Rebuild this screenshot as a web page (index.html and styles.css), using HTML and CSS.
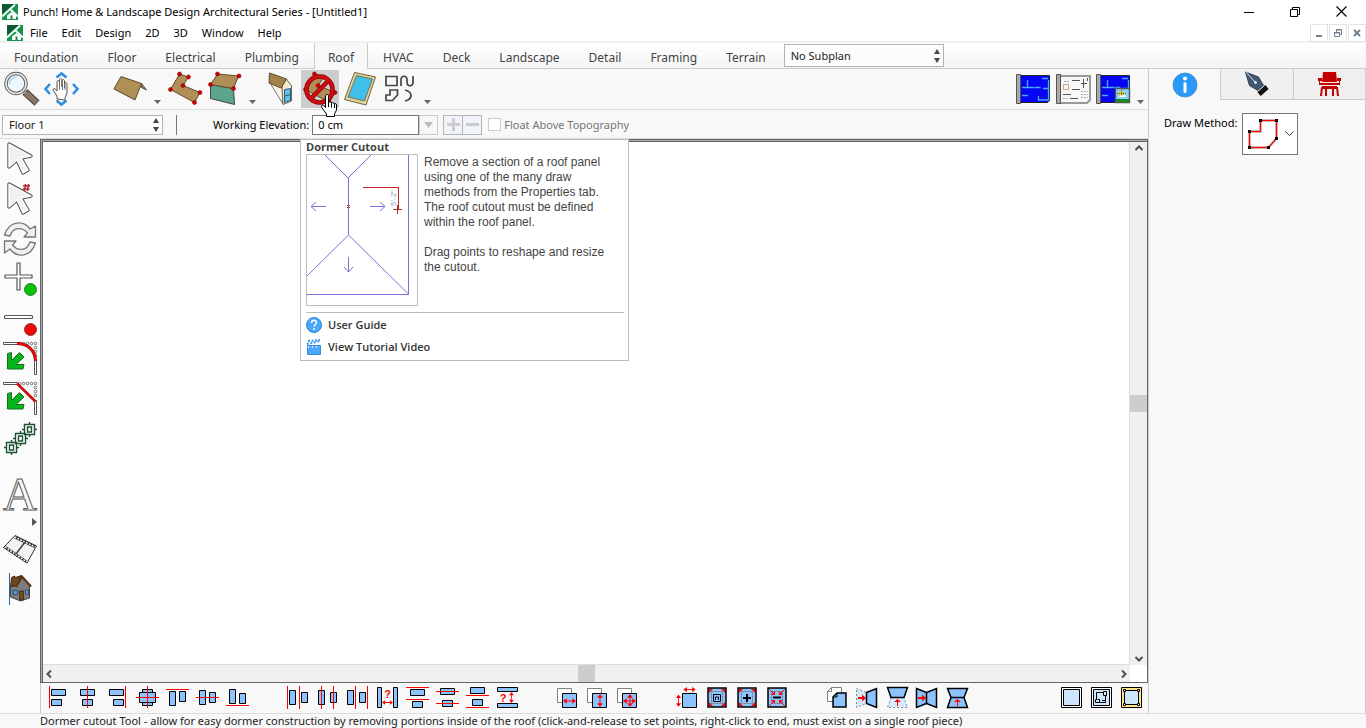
FILE: index.html
```
<!DOCTYPE html>
<html lang="en">
  <head>
    <meta charset="UTF-8" />
    <title>Punch! Home &amp; Landscape Design Architectural Series</title>
    <link rel="stylesheet" href="styles.css">
  </head>
  <body>
    <!-- shared shapes -->
    <svg class="defs" width="0" height="0" aria-hidden="true">
      <defs>
        <symbol id="logo" viewBox="0 0 16 16">
          <path fill="#14964a" d="M0 0h16v16H0z" />
          <path fill="#0b5a33" d="M0 0h12L0 10z" />
          <path fill="none" stroke="#fff" stroke-width="1.800" d="M0 12.500L13 .5M8 5l8 7.500" />
          <path fill="#fff" d="M9.500 8l4.500 3.500V15H5v-3.500z" />
          <path fill="#12884a" d="M8.500 11.500h2V15h-2z" />
        </symbol>
        <symbol id="updown" viewBox="0 0 8 14">
          <path fill="#444" d="M4 0l3 5H1zM4 14l3-5H1z" />
        </symbol>
        <symbol id="drop" viewBox="0 0 8 5">
          <path fill="#666" d="M0 0h7L3.500 4z" />
        </symbol>
        <symbol id="chevron" viewBox="0 0 8 8">
          <path fill="none" stroke="#505050" stroke-width="2" d="M.5 6L4 2.500 7.500 6" />
        </symbol>
        <symbol id="pointer" viewBox="0 0 40 40">
          <path fill="#f4f4f4" stroke="#555" stroke-width="3.400" stroke-linejoin="round" d="M9 5v23l8-7 6 13 5-3-7-12 10-2z" />
          <path fill="#f1f1f1" stroke="#fff" stroke-width="1.400" stroke-linejoin="round" d="M9 5v23l8-7 6 13 5-3-7-12 10-2z" />
        </symbol>
        <symbol id="corner" viewBox="0 0 40 40">
          <path fill="#fff" stroke="#555" d="M3.500 3.500h14v2h-14zM34.500 21.500h2v14h-2z" />
          <g fill="#fff" stroke="#555" stroke-width=".8">
            <circle cx="19.500" cy="4.500" r="1.300" /><circle cx="23.500" cy="4.500" r="1.300" /><circle cx="27.500" cy="4.500" r="1.300" />
            <circle cx="31.500" cy="4.500" r="1.300" /><circle cx="35.500" cy="4.500" r="1.300" /><circle cx="35.500" cy="8.500" r="1.300" />
            <circle cx="35.500" cy="12.500" r="1.300" /><circle cx="35.500" cy="16.500" r="1.300" />
          </g>
          <path fill="#05b51b" stroke="#176b1c" stroke-linejoin="round" d="M7.500 14.500l4-1v8l8-8 4.500 4.500-8 7.500h8l-1 4.500H7.500z" />
        </symbol>
        <symbol id="elbow" viewBox="0 0 40 40">
          <path fill="#b08f56" stroke="#5e4d2c" d="M14.500 5l9 3-5.500 8.500 17 7-5.500 10-24-13z" />
          <g fill="#d40000" stroke="#8d0000" stroke-width=".6">
            <circle cx="14.500" cy="5" r="2" /><circle cx="23.500" cy="8" r="2" /><circle cx="18" cy="16.500" r="2" />
            <circle cx="35" cy="23.500" r="2" /><circle cx="29.500" cy="33.500" r="2" /><circle cx="5.500" cy="20.500" r="2" />
          </g>
        </symbol>
        <symbol id="blueprint" viewBox="0 0 40 40">
          <path fill="#0505f2" stroke="#222" d="M6.500 6.500h30v25l-2 2h-28z" />
          <path fill="none" stroke="#4aa8f5" stroke-width="1.300" d="M14.500 11v7M9 18.500h12M21.500 18.500h6M30 19.500h5M35 9.500h-6M35.500 11v20h-10v-4M9 26.500h6" />
          <path fill="#aaa" stroke="#555" d="M3.500 5.500h4v29h-4z" />
        </symbol>
        <symbol id="arrow-h" viewBox="0 0 14 8">
          <path fill="#f00" d="M0 4l4-3v2.500h6V1l4 3-4 3V4.500H4V7z" />
        </symbol>
        <symbol id="arrow-v" viewBox="0 0 8 14">
          <path fill="#f00" d="M4 0l3 4H4.500v6H7l-3 4-3-4h2.500V4H1z" />
        </symbol>
        <symbol id="frame" viewBox="0 0 30 24">
          <path class="shape wide" d="M5 2h18v19H5z" />
          <path fill="none" stroke="#777" stroke-dasharray="2 1" d="M8.500 5.500h11v12h-11z" />
        </symbol>
      </defs>
    </svg>

    <header class="titlebar">
      <svg width="16" height="16"><use href="#logo" /></svg>
      <span class="caption">Punch! Home &amp; Landscape Design Architectural Series - [Untitled1]</span>
      <div class="window-btns">
        <button aria-label="Minimize"><svg width="10" height="10"><path stroke="#000" d="M0 5.500h10" /></svg></button>
        <button aria-label="Restore"><svg width="10" height="10"><path fill="none" stroke="#000" d="M.5 2.500h7v7h-7zM2.500 2V.5h7v7H8" /></svg></button>
        <button aria-label="Close"><svg width="11" height="11"><path stroke="#000" stroke-width="1.200" d="M.5.5l10 10M10.500.5l-10 10" /></svg></button>
      </div>
    </header>

    <nav class="menubar">
      <svg width="16" height="16"><use href="#logo" /></svg>
      <a href="#">File</a>
      <a href="#">Edit</a>
      <a href="#">Design</a>
      <a href="#">2D</a>
      <a href="#">3D</a>
      <a href="#">Window</a>
      <a href="#">Help</a>
      <div class="child-btns">
        <button aria-label="Minimize plan"><svg width="8" height="8"><path stroke="#708090" stroke-width="2" d="M1 7h6" /></svg></button>
        <button aria-label="Restore plan"><svg width="8" height="8"><path fill="none" stroke="#708090" d="M.5 3.500h5v4h-5zM0 4h6M2.500 3V.5h5v5H6M2 1h6" /></svg></button>
        <button aria-label="Close plan"><svg width="8" height="8"><path stroke="#708090" stroke-width="2" d="M1 1l6 6M7 1L1 7" /></svg></button>
      </div>
    </nav>

    <nav class="tabs">
      <a href="#">Foundation</a>
      <a href="#">Floor</a>
      <a href="#">Electrical</a>
      <a href="#">Plumbing</a>
      <a href="#" class="active">Roof</a>
      <a href="#">HVAC</a>
      <a href="#">Deck</a>
      <a href="#">Landscape</a>
      <a href="#">Detail</a>
      <a href="#">Framing</a>
      <a href="#">Terrain</a>
      <div class="spin-select subplan">
        <select aria-label="Subplan"><option>No Subplan</option></select>
        <svg width="8" height="14"><use href="#updown" /></svg>
      </div>
    </nav>

    <div class="app">
      <div class="workspace">
        <div class="toolbar">
          <button class="tool" aria-label="Zoom">
            <svg viewBox="0 0 40 40">
              <path stroke="#444" stroke-width="7.500" d="M24 23l12 11" />
              <path stroke="#8a7663" stroke-width="5.500" d="M25 24l10.500 9.500" />
              <path stroke="#999" stroke-width="3" d="M21.500 21.500l3 3" />
              <circle cx="15" cy="14.500" r="10" fill="#edf7ff" stroke="#555" stroke-width="3.400" />
              <circle cx="15" cy="14.500" r="10" fill="none" stroke="#e8e8e8" stroke-width="1.600" />
              <path fill="none" stroke="#b9dcf3" stroke-width="2" d="M8.500 15a7 7 0 0 1 7-7" />
            </svg>
          </button>
          <button class="tool" aria-label="Pan">
            <svg viewBox="0 0 40 40">
              <path fill="none" stroke="#2e8fe0" stroke-width="2.600" d="M15.500 8.500l5-4 5 4M15.500 31.500l5 4 5-4M9 15l-4.500 5L9 25M32 15l4.500 5-4.500 5" />
              <path fill="#fff" stroke="#555" stroke-linejoin="round" d="M16 30v-3l-4-6c0-2 2-2 4 1V13c0-2 2-2 2.500 0v5-7c0-2 2.500-2 2.500 0v7-6c0-2 2.500-2 2.500 0v7-4c0-2 2.500-2 2.500 0v9l-2 5v2z" />
              <path stroke="#777" d="M18.500 13v8M21.500 12v9M24 14v7" />
            </svg>
          </button>
          <button class="tool spaced" aria-label="Roof panel">
            <svg viewBox="0 0 40 40">
              <path fill="#8b7345" stroke="#555" stroke-linejoin="round" d="M31.500 14.500l5 6.500-6-3z" />
              <path fill="#b08f56" stroke="#5b4b2d" stroke-linejoin="round" d="M11 7.500l20.500 7-6.500 16.500-21-11z" />
            </svg>
          </button>
          <button class="drop" aria-label="More roof panels"><svg width="8" height="5"><use href="#drop" /></svg></button>
          <button class="tool" aria-label="Roof by outline"><svg><use href="#elbow" /></svg></button>
          <button class="tool" aria-label="Roof extrusion">
            <svg viewBox="0 0 40 40">
              <path fill="#5aa58b" stroke="#444" d="M5.500 15.500l23 4 1 16-24-6z" />
              <path fill="#b08f56" stroke="#5e4d2c" d="M12.500 5l21 2-5 12.500-23-4z" />
              <g fill="#d40000" stroke="#8d0000" stroke-width=".6">
                <circle cx="12.500" cy="5" r="2" /><circle cx="34" cy="7" r="2" /><circle cx="28.500" cy="19.500" r="2" /><circle cx="5.500" cy="15.500" r="2" />
              </g>
            </svg>
          </button>
          <button class="drop" aria-label="More extrusions"><svg width="8" height="5"><use href="#drop" /></svg></button>
          <button class="tool" aria-label="Dormer">
            <svg viewBox="0 0 40 40">
              <path fill="#faf3e4" stroke="#777" d="M10 14l12 3 1 18z" />
              <path fill="#f5ead2" stroke="#666" d="M22 17l4.500-7 5 7v15l-8.500 3.500z" />
              <path fill="#55c4ea" stroke="#456" d="M24.500 20.500l6-1v12l-6 2zM24.500 27l6-1.500" />
              <path fill="#a3824a" stroke="#5b4b2d" stroke-linejoin="round" d="M9.500 4L26.500 10 21 19 9 14z" />
            </svg>
          </button>
          <button class="tool active" aria-label="Dormer Cutout">
            <svg viewBox="0 0 40 40">
              <use href="#elbow" width="40" height="40" />
              <g fill="none" stroke="#8c0008" stroke-width="4.600"><circle cx="19.500" cy="20.500" r="13" /><path d="M11 29.500l17.500-18" /></g>
              <g fill="none" stroke="#d00d12" stroke-width="3"><circle cx="19.500" cy="20.500" r="13" /><path d="M11 29.500l17.500-18" /></g>
            </svg>
          </button>
          <button class="tool" aria-label="Skylight">
            <svg viewBox="0 0 40 40">
              <path fill="#e8d49d" stroke="#6d6245" stroke-linejoin="round" d="M14.500 3.500l21 4.500-9.500 28L4.500 30.500z" />
              <path fill="#40bfea" stroke="#7c7350" d="M16.500 6.500l16 3.500-8 22-16.500-4z" />
            </svg>
          </button>
          <button class="tool" aria-label="Draw shapes">
            <svg viewBox="0 0 40 40">
              <path fill="none" stroke="#444" stroke-width="1.700" d="M6 7.500h11v9H6zM21 17v-6c0-5 6-5 6 0v2c0 5 6 5 6 0V7M10 21h7.500v5l-5 5.500H6V26h4zM25 21c8 2 8 9 0 11" />
            </svg>
          </button>
          <button class="drop" aria-label="More shapes"><svg width="8" height="5"><use href="#drop" /></svg></button>

          <button class="tool push" aria-label="Plan view"><svg><use href="#blueprint" /></svg></button>
          <button class="tool" aria-label="Layout view">
            <svg viewBox="0 0 40 40">
              <path fill="#f7f7f7" stroke="#999" stroke-width="2" d="M6 7h31v24l-3 3H6z" />
              <path fill="none" stroke="#d7a37a" d="M10.500 15.500h5v5h-5z" />
              <path fill="none" stroke="#555" d="M19 11.500h8M19 20.500h8M10 25.500h8M17 29.500h8M30.500 10v9M34.500 9v3M28 14.500h6" />
              <path stroke="#aaa" stroke-dasharray="2 1" d="M28 22.500h7M28 25.500h7M28 28.500h7M10 29.500h6M11 12.500h5" />
              <path fill="#aaa" stroke="#555" d="M3.500 5.500h4v29h-4z" />
            </svg>
          </button>
          <button class="tool" aria-label="Split view">
            <svg viewBox="0 0 40 40">
              <use href="#blueprint" width="40" height="40" />
              <path fill="#8cd1f5" stroke="#555" stroke-width="1.400" d="M22.500 19.500h14v14h-14z" />
              <path fill="#138b23" d="M23 30h13v3H23z" />
              <circle cx="28" cy="24.500" r="2.500" fill="#f6d400" />
              <path stroke="#554" stroke-dasharray="1 1" d="M24 24.500h9M28.500 21v6" />
              <path fill="#fff" d="M26 28c0-2 3-2 3-1 1-2 5-1 4 1z" />
            </svg>
          </button>
          <button class="drop" aria-label="More views"><svg width="8" height="5"><use href="#drop" /></svg></button>
        </div>

        <div class="options">
          <div class="spin-select floor">
            <select aria-label="Floor"><option>Floor 1</option></select>
            <svg width="8" height="14"><use href="#updown" /></svg>
          </div>
          <span class="divider"></span>
          <label for="elevation">Working Elevation:</label>
          <input type="text" id="elevation" value="0 cm" />
          <button class="combo" aria-label="Elevations"><svg width="10" height="6"><path fill="#bbb" d="M0 0h9L4.500 6z" /></svg></button>
          <div class="steps">
            <button aria-label="Increase"><svg width="13" height="13"><path stroke="#ccc" stroke-width="3" d="M0 6.500h13M6.500 0v13" /></svg></button>
            <button aria-label="Decrease"><svg width="13" height="13"><path stroke="#ccc" stroke-width="3" d="M0 6.500h13" /></svg></button>
          </div>
          <input type="checkbox" id="float" disabled />
          <label for="float" class="muted">Float Above Topography</label>
        </div>

        <div class="stage">
          <aside class="palette">
            <button aria-label="Select"><svg><use href="#pointer" /></svg></button>
            <button aria-label="Select by number">
              <svg viewBox="0 0 40 40">
                <use href="#pointer" width="40" height="40" />
                <path stroke="#b32a32" stroke-width="1.500" d="M25.500 5l-1 7M28.500 5l-1 7M23 7h7M22.500 10h7" />
              </svg>
            </button>
            <button aria-label="Rotate">
              <svg viewBox="0 0 40 40">
                <g fill="#f1f1f1" stroke="#777" stroke-width="1.300" stroke-linejoin="round">
                  <path d="M4.500 16C9 2 23 .5 30 10l5.500-3v11H24l3.500-4C22 7.500 13 8 10 17z" />
                  <path d="M35.500 24C31 38 17 39.500 10 30l-5.500 4V22H16l-3.500 4C18 32.500 27 32 30 23z" />
                </g>
              </svg>
            </button>
            <button aria-label="Add point">
              <svg viewBox="0 0 40 40">
                <path fill="#fff" stroke="#555" stroke-width="1.200" stroke-linejoin="round" d="M17 4h3v12h12v3H20v12h-3V19H5v-3h12z" />
                <circle cx="30.500" cy="30.500" r="6" fill="#07c407" stroke="#347a34" />
              </svg>
            </button>
            <button aria-label="Remove point">
              <svg viewBox="0 0 40 40">
                <rect x="4.500" y="16.500" width="28" height="3" rx="1" fill="#fff" stroke="#555" stroke-width="1.200" />
                <circle cx="30.500" cy="30.500" r="6" fill="#ee0808" stroke="#8d3333" />
              </svg>
            </button>
            <button aria-label="Fillet">
              <svg viewBox="0 0 40 40">
                <use href="#corner" width="40" height="40" />
                <path fill="none" stroke="#7d1111" stroke-width="3" d="M17 4.500c10 0 18 6 18.500 17.500" />
                <path fill="none" stroke="#f00" stroke-width="2" d="M17 4.500c10 0 18 6 18.500 17.500" />
              </svg>
            </button>
            <button aria-label="Chamfer">
              <svg viewBox="0 0 40 40">
                <use href="#corner" width="40" height="40" />
                <path stroke="#7d1111" stroke-width="2.500" d="M17 4.500l18.500 18" />
                <path stroke="#f00" stroke-width="1.500" d="M17 4.500l18.500 18" />
              </svg>
            </button>
            <button aria-label="Duplicate">
              <svg viewBox="0 0 40 40">
                <g fill="#fff" stroke="#1d4f33" stroke-width="1.400">
                  <path d="M29.500 3v15M22 10.500h15M20.500 12v15M13 19.500h15M11.500 21v15M4 28.500h15" />
                  <path d="M24.500 5.500h10v10h-10zM15.500 14.500h10v10h-10zM6.500 23.500h10v10h-10z" />
                  <path d="M27.500 8h4v5h-4zM18.500 17h4v5h-4zM9.500 26h4v5h-4z" />
                </g>
              </svg>
            </button>
            <button class="letter" aria-label="Text">A</button>
            <button class="side" aria-label="More text tools"><svg width="5" height="8"><path fill="#555" d="M0 0l5 4-5 4z" /></svg></button>
            <button aria-label="Walkthrough">
              <svg viewBox="0 0 40 40">
                <path fill="#f2f2f2" stroke="#333" d="M15 6.500l21.500 10.500L27 34 3.500 18.500z" />
                <path fill="none" stroke="#333" stroke-width="2.600" d="M14.500 8L35.500 18M5 18l21 14.500" />
                <path fill="none" stroke="#fff" stroke-width="1.400" stroke-dasharray="1.800 1.400" d="M14.500 8L35.500 18M5 18l21 14.500" />
                <path stroke="#444" stroke-width="1.600" d="M25 13l-9 12" />
              </svg>
            </button>
            <button aria-label="3D view">
              <svg viewBox="0 0 40 40">
                <path fill="#7d7d7d" stroke="#444" d="M10.500 18l7-3 5-6 7 8v12l-9 3-10-4z" />
                <path fill="#714621" stroke="#43270f" d="M10.500 17.500l1-9 3-1.500 1 1.500 6-2-4.500 10z" />
                <path fill="none" stroke="#5a3517" stroke-width="2" d="M16 18l6-10.500L31 17.500" />
                <path fill="#4ca4ef" stroke="#234" stroke-width=".7" d="M13.500 21.500h4v4h-4zM25.500 21h3v4h-3z" />
                <path fill="#75481f" stroke="#321" stroke-width=".7" d="M19.500 22h4v9h-4z" />
                <path stroke="#1c6cb8" d="M9.500 4v32" />
              </svg>
            </button>
          </aside>

          <div class="center">
            <div class="frame">
              <main class="canvas"></main>
              <div class="scroll vertical">
                <button aria-label="Scroll up"><svg width="8" height="8"><use href="#chevron" /></svg></button>
                <span class="thumb"></span>
                <button aria-label="Scroll down"><svg class="turn-down" width="8" height="8"><use href="#chevron" /></svg></button>
              </div>
              <div class="scroll horizontal">
                <button aria-label="Scroll left"><svg class="turn-left" width="8" height="8"><use href="#chevron" /></svg></button>
                <span class="thumb"></span>
                <button aria-label="Scroll right"><svg class="turn-right" width="8" height="8"><use href="#chevron" /></svg></button>
              </div>
              <span class="scroll-corner"></span>
            </div>

            <div class="alignbar">
              <div class="group">
                <button aria-label="Align left"><svg viewBox="0 0 30 24"><path class="shape" d="M8.500 3.500h14v6h-14zM8.500 13.500h10v6h-10z" /><path class="guide" d="M6.500 0v22" /></svg></button>
                <button aria-label="Align centers"><svg viewBox="0 0 30 24"><path class="shape" d="M7.500 3.500h14v6h-14zM9.500 13.500h10v6h-10z" /><path class="guide" d="M14.500 0v22" /></svg></button>
                <button aria-label="Align right"><svg viewBox="0 0 30 24"><path class="shape" d="M6.500 3.500h14v6h-14zM10.500 13.500h10v6h-10z" /><path class="guide" d="M22.500 0v22" /></svg></button>
                <button aria-label="Align both centers"><svg viewBox="0 0 30 24"><path class="shape" d="M9.500 3.500h10v16h-10z" /><path class="shape" d="M6.500 6.500h16v10h-16z" /><path class="guide" d="M14.500 0v22M3 11.500h23" /></svg></button>
                <button aria-label="Align top"><svg viewBox="0 0 30 24"><path class="shape" d="M6.500 5.500h6v14h-6zM16.500 5.500h6v10h-6z" /><path class="guide" d="M3 3.500h23" /></svg></button>
                <button aria-label="Align middles"><svg viewBox="0 0 30 24"><path class="shape" d="M6.500 4.500h6v14h-6zM16.500 6.500h6v10h-6z" /><path class="guide" d="M3 11.500h23" /></svg></button>
                <button aria-label="Align bottom"><svg viewBox="0 0 30 24"><path class="shape" d="M6.500 3.500h6v14h-6zM16.500 7.500h6v10h-6z" /><path class="guide" d="M3 19.500h23" /></svg></button>
              </div>
              <div class="group">
                <button aria-label="Distribute lefts"><svg viewBox="0 0 30 24"><path class="shape" d="M6.500 4.500h6v14h-6zM18.500 6.500h6v10h-6z" /><path class="guide" d="M4.500 0v23M16.500 0v23" /></svg></button>
                <button aria-label="Distribute centers"><svg viewBox="0 0 30 24"><path class="shape" d="M5.500 4.500h6v14h-6zM17.500 6.500h6v10h-6z" /><path class="guide" d="M8.500 0v23M20.500 0v23" /></svg></button>
                <button aria-label="Distribute rights"><svg viewBox="0 0 30 24"><path class="shape" d="M4.500 4.500h6v14h-6zM16.500 6.500h6v10h-6z" /><path class="guide" d="M12.500 0v23M24.500 0v23" /></svg></button>
                <button aria-label="Space horizontally"><svg viewBox="0 0 30 24"><path class="shape" d="M4.500 1.500h4v20h-4zM20.500 1.500h4v20h-4z" /><text class="mark" x="14.500" y="12">?</text><use href="#arrow-h" x="9" y="13" width="11" height="7" /></svg></button>
                <button aria-label="Distribute tops"><svg viewBox="0 0 30 24"><path class="shape" d="M7.500 3.500h14v6h-14zM9.500 15.500h10v6h-10z" /><path class="guide" d="M3 1.500h23M3 13.500h23" /></svg></button>
                <button aria-label="Distribute middles"><svg viewBox="0 0 30 24"><path class="shape" d="M7.500 2.500h14v6h-14zM9.500 14.500h10v6h-10z" /><path class="guide" d="M3 5.500h23M3 17.500h23" /></svg></button>
                <button aria-label="Distribute bottoms"><svg viewBox="0 0 30 24"><path class="shape" d="M7.500 1.500h14v6h-14zM9.500 13.500h10v6h-10z" /><path class="guide" d="M3 9.500h23M3 21.500h23" /></svg></button>
                <button aria-label="Space vertically"><svg viewBox="0 0 30 24"><path class="shape" d="M4.500 1.500h20v4h-20zM4.500 17.500h20v4h-20z" /><text class="mark" x="10" y="16">?</text><use href="#arrow-v" x="15" y="6" width="7" height="11" /></svg></button>
              </div>
              <div class="group">
                <button aria-label="Same width"><svg viewBox="0 0 30 24"><path class="ghost" d="M4.500 2.500h14v14h-14z" /><path class="shape" d="M9.500 7.500h14v14h-14z" /><use href="#arrow-h" x="10" y="11" width="13" height="8" /></svg></button>
                <button aria-label="Same height"><svg viewBox="0 0 30 24"><path class="ghost" d="M4.500 2.500h14v14h-14z" /><path class="shape" d="M9.500 7.500h14v14h-14z" /><use href="#arrow-v" x="13" y="8" width="8" height="13" /></svg></button>
                <button aria-label="Same size"><svg viewBox="0 0 30 24"><path class="ghost" d="M4.500 2.500h14v14h-14z" /><path class="shape" d="M9.500 7.500h14v14h-14z" /><use href="#arrow-h" x="10" y="11" width="13" height="8" /><use href="#arrow-v" x="13" y="8" width="8" height="13" /></svg></button>
              </div>
              <div class="group">
                <button aria-label="Set size"><svg viewBox="0 0 30 24"><path class="shape" d="M9.500 7.500h14v14h-14z" /><use href="#arrow-h" x="9" y="0" width="15" height="7" /><use href="#arrow-v" x="2" y="7" width="7" height="15" /></svg></button>
                <button aria-label="Scale to fit"><svg viewBox="0 0 30 24"><use href="#frame" width="30" height="24" /><path class="red" d="M6 3h4l-4 4zM22 3h-4l4 4zM6 20h4l-4-4zM22 20h-4l4-4z" /><path fill="none" stroke="#000" d="M10.500 8.500h7v7h-7zM12.500 14v-3h3v3" /></svg></button>
                <button aria-label="Scale up"><svg viewBox="0 0 30 24"><use href="#frame" width="30" height="24" /><path class="red" d="M6 3h4l-4 4zM22 3h-4l4 4zM6 20h4l-4-4zM22 20h-4l4-4z" /><path stroke="#000" stroke-width="2" d="M10 12h8M14 8v8" /></svg></button>
                <button aria-label="Scale down"><svg viewBox="0 0 30 24"><use href="#frame" width="30" height="24" /><path fill="none" stroke="#f00" d="M6.500 3.500l4 4M21.500 3.500l-4 4M6.500 19.500l4-4M21.500 19.500l-4-4" /><path class="red" d="M12 9H8l4-4zM16 9h4l-4-4zM12 14H8l4 4zM16 14h4l-4 4z" /><path stroke="#000" stroke-width="2" d="M10 11.500h8" /></svg></button>
              </div>
              <div class="group">
                <button aria-label="Copy"><svg viewBox="0 0 30 24"><path class="ghost" d="M8.500 1.500h10v14h-14v-10zM8.500 1.500v4h-4" /><path class="shape wide" d="M14 7h9v14H10V11z" /><path fill="none" stroke="#000" d="M14 7v4h-4" /></svg></button>
                <button aria-label="Mirror copy right"><svg viewBox="0 0 30 24"><path class="dashed" d="M3.500 2.500l10 4v11l-10 4z" /><path class="shape wide" d="M13.500 6.500l10-4v19l-10-4z" /><path class="red" d="M5 11h4V8.500l4 3.500-4 3.500V13H5z" /></svg></button>
                <button aria-label="Mirror copy up"><svg viewBox="0 0 30 24"><path class="dashed" d="M8 11.500h13l3.500 10h-20z" /><path class="shape wide" d="M4.500 1.500h20L21 11.500H8z" /><path class="red" d="M14 20v-4h-3l3.500-3 3.500 3h-3v4z" /></svg></button>
                <button aria-label="Mirror horizontally"><svg viewBox="0 0 30 24"><path class="shape wide" d="M3.500 2.500l10 4v11l-10 4zM13.500 6.500l10-4v19l-10-4z" /><path class="red" d="M5 11h4V8.500l4 3.500-4 3.500V13H5z" /></svg></button>
                <button aria-label="Mirror vertically"><svg viewBox="0 0 30 24"><path class="shape wide" d="M4.500 2.500h20L21 11.500H8zM8 11.500h13l3.500 10h-20z" /><path class="red" d="M14 20v-4h-3l3.500-3 3.500 3h-3v4z" /></svg></button>
              </div>
              <div class="group last">
                <button aria-label="Plain view"><svg viewBox="0 0 30 24"><path fill="#fff" stroke="#000" d="M5.500 1.500h20v20h-20z" /><path fill="#cfe6ff" stroke="#000" d="M7.500 3.500h16v16h-16z" /></svg></button>
                <button aria-label="Detail view"><svg viewBox="0 0 30 24"><path fill="#fff" stroke="#000" d="M5.500 1.500h20v20h-20z" /><path fill="#cfe6ff" stroke="#000" d="M7.500 3.500h16v16h-16z" /><path fill="none" stroke="#000" d="M10.500 14V6.500h7v-1h3v4h-3v-3M19.500 10v6.500h-6M10.500 13.500h-1v3h4v-3h-2M16 14.500h3" /></svg></button>
                <button aria-label="Handle view"><svg viewBox="0 0 30 24"><path fill="#ffe48c" stroke="#000" d="M5.500 1.500h20v20h-20z" /><path fill="#cfe6ff" stroke="#000" d="M8.500 4.500h14v14h-14z" /><path fill="#fff" stroke="#000" d="M7.500 3.500h2v2h-2zM21.500 3.500h2v2h-2zM7.500 17.500h2v2h-2zM21.500 17.500h2v2h-2z" /></svg></button>
              </div>
            </div>
          </div>
        </div>

        <svg class="hand" viewBox="0 0 18 24">
          <path fill="#fff" stroke="#000" stroke-linejoin="round" d="M5.500 2c0-2 3-2 3 0v7c0-1.500 3-1.500 3 .5 0-1.500 2.500-1 2.500.5 0-1 2.500-1 2.500 1v5l-2 4v2.500h-8V20l-5-7c-.5-2 2-2.500 4 .5z" />
          <path stroke="#000" d="M8.500 9v4M11.500 9.500v4M14.500 10v4" />
        </svg>

        <section class="tooltip">
          <h2>Dormer Cutout</h2>
          <div class="tip-body">
            <svg class="preview" width="112" height="152" viewBox="0 0 112 152">
              <path fill="#fff" stroke="#bbb" d="M.5.500h111v151H.5z" />
              <g fill="none" stroke="#7674d8">
                <path d="M19 1l23 23L65 1M42.500 24v57M42.500 81L1 122M42.500 81l60 59M102.500 1v139.500H1" />
                <path d="M20 52.500H5M10 48l-5 4.500 5 4.500M64 52.500h15M74 48l5 4.500-5 4.500M42.500 103v15M38 113l4.500 5 4.500-5" />
              </g>
              <path stroke="#c22" d="M57 33.500h36M92.500 33v22M41 51l3 3M44 51l-3 3" />
              <path stroke="#a33" d="M87 55.500h9M91.500 51v9" />
              <text transform="translate(90 52) rotate(-90)" class="dim">5'-2"</text>
            </svg>
            <div class="tip-text">
              <p>Remove a section of a roof panel using one of the many draw methods from the Properties tab. The roof cutout must be defined within the roof panel.</p>
              <p>Drag points to reshape and resize the cutout.</p>
            </div>
          </div>
          <div class="tip-links">
            <a href="#">
              <svg width="16" height="16"><circle cx="8" cy="8" r="7.500" fill="#4ba7fb" stroke="#2a84d8" /><path fill="none" stroke="#fff" stroke-width="1.500" d="M5.500 6c0-3.500 5-3.500 5-.5 0 2-2.500 2-2.500 4M8 11v2" /></svg>
              User Guide
            </a>
            <a href="#">
              <svg width="16" height="16"><path fill="#4ba7fb" stroke="#338adc" d="M1.500 6.500h13v9h-13z" /><path fill="none" stroke="#3f97e8" stroke-width="2" stroke-dasharray="2 1.500" d="M1 5l13-3M2 2l12-1" /><path stroke="#fff" d="M3 7l-1 2M7 7L6 9M11 7l-1 2" /></svg>
              View Tutorial Video
            </a>
          </div>
        </section>
      </div>

      <aside class="panel">
        <div class="panel-tabs">
          <button class="active" aria-label="Properties">
            <svg width="28" height="28"><circle cx="14" cy="14" r="12" fill="#2a9afa" stroke="#4b93d1" /><circle cx="14" cy="7.500" r="2" fill="#fff" /><path fill="none" stroke="#fff" stroke-width="3" stroke-linecap="round" d="M14 12.500v8" /></svg>
          </button>
          <button aria-label="Materials">
            <svg width="28" height="28"><path fill="#40586e" stroke="#2b4052" d="M2.500 2l13 5 5 8.500-5.500 5-8.500-5z" /><path stroke="#dfe8ef" d="M3 2l9 10" /><circle cx="12.500" cy="12.500" r="1.300" fill="#fff" /><path stroke="#111" stroke-width="5" d="M16 24l8-7" /><path stroke="#ddd" d="M15 21l6-5" /></svg>
          </button>
          <button aria-label="Objects">
            <svg width="28" height="28"><path fill="#c20000" d="M8 2h13l1 10H7zM3 8h4v3H3zM22 8h4v3h-4zM4 11h1v4H4zM24 11h1v4h-1zM4 13h21v2H4zM7 16h15v3H7zM6 17h2l-1 9H5zM21 17h2l1 9h-2zM10 19h2v7h-2zM17 19h2v7h-2z" /></svg>
          </button>
        </div>
        <div class="draw-method">
          <label for="method">Draw Method:</label>
          <button id="method">
            <svg width="32" height="32"><path fill="none" stroke="#a66" stroke-width="2" d="M2.500 29.500v-16h11V2.500h16v18l-8 9z" /><path fill="none" stroke="#f00" d="M2.500 29.500v-16h11V2.500h16v18l-8 9z" /><path fill="#000" d="M1 28h3v3H1zM1 12h3v3H1zM12 1h3v3h-3zM28 1h3v3h-3zM28 19h3v3h-3zM20 28h3v3h-3z" /></svg>
            <svg width="9" height="6"><path fill="none" stroke="#333" d="M.5.5l4 4 4-4" /></svg>
          </button>
        </div>
      </aside>
    </div>

    <footer class="status">Dormer cutout Tool - allow for easy dormer construction by removing portions inside of the roof (click-and-release to set points, right-click to end, must exist on a single roof piece)</footer>
  </body>
</html>
```

FILE: styles.css
```
* {
  box-sizing: border-box;
}
body {
  margin: 0;
  height: 100vh;
  display: flex;
  flex-direction: column;
  background: #f8f8f8;
  color: #000;
  font: 12px/16px "Noto Sans", "Open Sans", sans-serif;
  overflow: hidden;
}
button {
  margin: 0;
  padding: 0;
  border: none;
  background: none;
  display: flex;
  justify-content: center;
  align-items: center;
}
svg {
  display: block;
  flex: none;
}
a {
  color: inherit;
  text-decoration: none;
}
.defs {
  position: absolute;
}

/* title and menu */
.titlebar {
  height: 23px;
  display: flex;
  align-items: center;
  background: #fff;
  padding: 0 2px;
  font-size: 11px;
}
.caption {
  margin-left: 5px;
}
.window-btns {
  display: flex;
  margin-left: auto;
}
.window-btns button {
  width: 46px;
  height: 22px;
}
.menubar {
  height: 20px;
  display: flex;
  align-items: center;
  background: #fff;
  border-bottom: 2px solid #f0f0f0;
  padding: 2px 0 0 7px;
  font-size: 11px;
}
.menubar a {
  padding: 0 7px;
}
.child-btns {
  display: flex;
  gap: 1px;
  margin-left: auto;
}
.child-btns button {
  width: 18px;
  height: 18px;
  border: 1px solid #e3e3e3;
}

/* tabs */
.tabs {
  height: 26px;
  display: flex;
  align-items: stretch;
  gap: 1px;
  background: linear-gradient(#fff, #f4f4f4);
  border-bottom: 1px solid #ccc;
  color: #444;
  line-height: 29px;
}
.tabs a {
  padding: 0 14px;
}
.tabs .active {
  height: 26px;
  padding: 0 13px;
  background: #f8f8f8;
  border: 1px solid #ccc;
  border-width: 0 1px;
}
.spin-select {
  display: flex;
  align-items: center;
  position: relative;
}
.spin-select select {
  appearance: none;
  width: 100%;
  height: 100%;
  border: 1px solid #b4b4b4;
  border-radius: 0;
  background: #fcfcfc;
  padding: 0 6px;
  font: 11px "Noto Sans", "Open Sans", sans-serif;
  color: #222;
}
.spin-select svg {
  position: absolute;
  right: 3px;
  pointer-events: none;
}
.subplan {
  width: 160px;
  height: 23px;
  margin: 1px 0 0 3px;
}

/* work area */
.app {
  flex: 1;
  display: flex;
  min-height: 0;
}
.workspace {
  flex: 1;
  min-width: 0;
  display: flex;
  flex-direction: column;
  position: relative;
}
.toolbar {
  height: 41px;
  display: flex;
  padding-left: 1px;
  border-bottom: 1px solid #ddd;
}
.tool,
.tool svg {
  width: 40px;
  height: 40px;
}
.tool.active {
  background: linear-gradient(#ccc, #ccc) center / 38px 38px no-repeat;
}
.tool.spaced {
  margin-left: 29px;
}
.tool.push {
  margin-left: auto;
}
.drop {
  width: 15px;
  padding-top: 26px;
}
.options {
  height: 29px;
  display: flex;
  align-items: center;
  padding: 1px 0 0 2px;
  border-bottom: 1px solid #ddd;
  font-size: 11px;
}
.floor {
  width: 161px;
  height: 20px;
}
.divider {
  width: 1px;
  height: 20px;
  margin: 0 36px 0 13px;
  background: #777;
}
#elevation {
  width: 107px;
  height: 20px;
  margin-left: 3px;
  padding: 0 5px;
  border: 1px solid #777;
  font: inherit;
}
.combo {
  width: 19px;
  height: 20px;
  border: 1px solid #ccc;
}
.steps {
  display: flex;
  margin: 0 6px 0 5px;
}
.steps button {
  width: 20px;
  height: 20px;
  border: 1px solid #b4b4b4;
  background: #f1f5fb;
}
.steps button + button {
  margin-left: -1px;
}
#float {
  appearance: none;
  width: 13px;
  height: 13px;
  margin: 0 3px 0 0;
  border: 1px solid #ccc;
  background: #fff;
}
.muted {
  color: #777;
}

.stage {
  flex: 1;
  display: flex;
  min-height: 0;
}
.palette {
  width: 40px;
  background: #fbfbfb;
}
.palette button,
.palette button svg {
  width: 40px;
  height: 40px;
}
.palette .letter {
  margin-top: 15px;
  font: 47px/40px "Liberation Serif", serif;
  color: #fafafa;
  -webkit-text-stroke: 1px #555;
}
.palette .side {
  height: 15px;
  justify-content: flex-end;
  padding-right: 3px;
}
.palette .side svg {
  width: 5px;
  height: 8px;
}
.center {
  flex: 1;
  min-width: 0;
  display: flex;
  flex-direction: column;
}
.frame {
  flex: 1;
  display: grid;
  grid-template-columns: 1fr 17px;
  grid-template-rows: 1fr 17px;
  background: #aaa;
  border: 1px solid #666;
  border-width: 3px 1px 1px 3px;
  border-top-style: double;
  border-left-style: double;
}
.canvas {
  background: #fff;
  border: 1px solid #ddd;
  border-width: 0 1px 1px 0;
}
.scroll {
  display: flex;
  justify-content: space-between;
  background: #f0f0f0;
}
.scroll button {
  width: 12px;
  height: 12px;
}
.vertical {
  flex-direction: column;
  align-items: center;
}
.horizontal {
  align-items: center;
}
.scroll-corner {
  background: #fff;
}
.thumb {
  width: 17px;
  height: 17px;
  background: #cdcdcd;
}
.turn-down {
  transform: rotate(180deg);
}
.turn-left {
  transform: rotate(-90deg);
}
.turn-right {
  transform: rotate(90deg);
}

/* align bar */
.alignbar {
  height: 30px;
  display: flex;
  align-items: center;
  gap: 30px;
  padding: 0 2px;
  border-left: 1px solid #ccc;
}
.group {
  display: flex;
}
.group.last {
  margin-left: auto;
}
.group svg {
  width: 30px;
  height: 24px;
}
.shape {
  fill: #8cc3fc;
  stroke: #000;
}
.wide {
  stroke-width: 1.5px;
}
.guide {
  stroke: #f00;
}
.ghost {
  fill: #fff;
  stroke: #808080;
}
.dashed {
  fill: #d5e9fd;
  stroke: #888;
  stroke-dasharray: 2 2;
}
.red {
  fill: #f00;
}
.mark {
  fill: #f00;
  font: bold 11px "Liberation Sans", sans-serif;
  text-anchor: middle;
}

/* tooltip */
.hand {
  position: absolute;
  left: 320px;
  top: 25px;
  width: 18px;
  height: 24px;
}
.tooltip {
  position: absolute;
  left: 300px;
  top: 70px;
  width: 329px;
  padding: 0 4px 2px 5px;
  background: #fff;
  border: 1px solid #bbb;
  color: #444;
}
.tooltip h2 {
  margin: 0;
  font-family: "Open Sans", sans-serif;
  font-size: 11px;
  line-height: 14px;
}
.tip-body {
  display: flex;
  gap: 6px;
  padding-bottom: 6px;
}
.tip-text {
  padding: 1px 10px 0 0;
  font: 12px/15px "Liberation Sans", Arial, sans-serif;
}
.tip-text p {
  margin: 0 0 15px;
}
.dim {
  fill: #7ba3b8;
  font: 8px "Liberation Sans", sans-serif;
}
.tip-links {
  border-top: 1px solid #bbb;
  padding-top: 1px;
}
.tip-links a {
  display: flex;
  align-items: center;
  gap: 6px;
  height: 22px;
  font-family: "Open Sans", sans-serif;
  font-size: 11px;
  font-weight: 600;
  color: #333;
}

/* right panel */
.panel {
  width: 218px;
  border: 1px solid #ccc;
  border-width: 0 1px;
}
.panel-tabs {
  display: flex;
  height: 31px;
}
.panel-tabs button {
  flex: 1;
  background: #efefef;
  border: 1px solid #ccc;
  border-width: 0 0 1px 1px;
}
.panel-tabs .active {
  background: none;
  border: none;
}
.draw-method {
  display: flex;
  align-items: flex-start;
  gap: 5px;
  padding: 13px 15px;
  font-size: 11px;
  line-height: 20px;
}
.draw-method button {
  width: 56px;
  height: 42px;
  gap: 6px;
  border: 1px solid #777;
  background: #fff;
}

.status {
  height: 15px;
  border-top: 1px solid #ddd;
  padding-left: 40px;
  font-size: 11px;
  line-height: 13px;
  color: #222;
  white-space: nowrap;
}
```
